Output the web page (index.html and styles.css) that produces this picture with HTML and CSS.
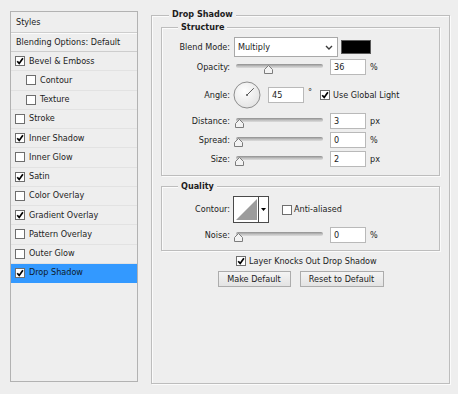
FILE: index.html
```html
<!DOCTYPE html>
<html>
<head>
<meta charset="utf-8">
<title>Layer Style</title>
<link rel="stylesheet" href="styles.css">
</head>
<body>
<div class="dialog">
  <div class="styles-list">
    <div class="list-head">Styles</div>
    <div class="list-blend">Blending Options: Default</div>
    <div class="item"><span class="cb"><svg viewBox="0 0 8 8"><path d="M1.2 4.2 L3.2 6.4 L6.9 1.2"/></svg></span>Bevel &amp; Emboss</div>
    <div class="item sub"><span class="cb"></span>Contour</div>
    <div class="item sub"><span class="cb"></span>Texture</div>
    <div class="item"><span class="cb"></span>Stroke</div>
    <div class="item"><span class="cb"><svg viewBox="0 0 8 8"><path d="M1.2 4.2 L3.2 6.4 L6.9 1.2"/></svg></span>Inner Shadow</div>
    <div class="item"><span class="cb"></span>Inner Glow</div>
    <div class="item"><span class="cb"><svg viewBox="0 0 8 8"><path d="M1.2 4.2 L3.2 6.4 L6.9 1.2"/></svg></span>Satin</div>
    <div class="item"><span class="cb"></span>Color Overlay</div>
    <div class="item"><span class="cb"><svg viewBox="0 0 8 8"><path d="M1.2 4.2 L3.2 6.4 L6.9 1.2"/></svg></span>Gradient Overlay</div>
    <div class="item"><span class="cb"></span>Pattern Overlay</div>
    <div class="item"><span class="cb"></span>Outer Glow</div>
    <div class="item selected"><span class="cb"><svg viewBox="0 0 8 8"><path d="M1.2 4.2 L3.2 6.4 L6.9 1.2"/></svg></span>Drop Shadow</div>
  </div>

  <div class="main">
    <div class="group outer">
      <div class="group-title outer-title">Drop Shadow</div>

      <div class="group structure">
        <div class="group-title">Structure</div>

        <div class="row row-blend">
          <div class="label">Blend Mode:</div>
          <div class="select"><span>Multiply</span><svg class="chev" viewBox="0 0 8 5"><polyline points="1,1 4,4 7,1"/></svg></div>
          <div class="swatch"></div>
        </div>

        <div class="row row-std gap2">
          <div class="label">Opacity:</div>
          <div class="slider"><div class="track"></div><svg class="thumb" style="left:28px" viewBox="0 0 9 9"><path d="M0.5 8.5 V4.5 L4.5 0.5 L8.5 4.5 V8.5 Z"/></svg></div>
          <div class="num">36</div>
          <div class="unit">%</div>
        </div>

        <div class="row row-angle">
          <div class="label">Angle:</div>
          <svg class="dial" viewBox="0 0 28 28">
            <defs><radialGradient id="dg" cx="0.4" cy="0.35" r="0.7"><stop offset="0" stop-color="#ffffff"/><stop offset="1" stop-color="#e2e2e2"/></radialGradient></defs>
            <circle cx="14" cy="14" r="13" fill="url(#dg)" stroke="#8e8e8e" stroke-width="1"/>
            <line x1="14" y1="14" x2="20.8" y2="7.2" stroke="#5a5a5a" stroke-width="1"/>
            <circle cx="14" cy="14" r="1" fill="#555"/>
          </svg>
          <div class="num angle-num">45</div>
          <div class="deg">°</div>
          <span class="cb gl"><svg viewBox="0 0 8 8"><path d="M1.2 4.2 L3.2 6.4 L6.9 1.2"/></svg></span>
          <div class="cb-text">Use Global Light</div>
        </div>

        <div class="row row-std gap4">
          <div class="label">Distance:</div>
          <div class="slider"><div class="track"></div><svg class="thumb" style="left:-1px" viewBox="0 0 9 9"><path d="M0.5 8.5 V4.5 L4.5 0.5 L8.5 4.5 V8.5 Z"/></svg></div>
          <div class="num">3</div>
          <div class="unit">px</div>
        </div>

        <div class="row row-std gap3">
          <div class="label">Spread:</div>
          <div class="slider"><div class="track"></div><svg class="thumb" style="left:-2px" viewBox="0 0 9 9"><path d="M0.5 8.5 V4.5 L4.5 0.5 L8.5 4.5 V8.5 Z"/></svg></div>
          <div class="num">0</div>
          <div class="unit">%</div>
        </div>

        <div class="row row-std gap3">
          <div class="label">Size:</div>
          <div class="slider"><div class="track"></div><svg class="thumb" style="left:-1px" viewBox="0 0 9 9"><path d="M0.5 8.5 V4.5 L4.5 0.5 L8.5 4.5 V8.5 Z"/></svg></div>
          <div class="num">2</div>
          <div class="unit">px</div>
        </div>
      </div>

      <div class="group quality">
        <div class="group-title">Quality</div>

        <div class="row row-contour">
          <div class="label">Contour:</div>
          <svg class="contour" viewBox="0 0 36 27">
            <rect x="0.5" y="0.5" width="35" height="26" fill="#ffffff" stroke="#4a4a4a"/>
            <polygon points="3,24 24,3 24,24" fill="#9c9c9c"/>
            <line x1="25.5" y1="1" x2="25.5" y2="26" stroke="#4a4a4a"/>
            <polygon points="28,12 33,12 30.5,15" fill="#000"/>
          </svg>
          <span class="cb aa"></span>
          <div class="cb-text">Anti-aliased</div>
        </div>

        <div class="row row-std gap4">
          <div class="label">Noise:</div>
          <div class="slider"><div class="track"></div><svg class="thumb" style="left:-2px" viewBox="0 0 9 9"><path d="M0.5 8.5 V4.5 L4.5 0.5 L8.5 4.5 V8.5 Z"/></svg></div>
          <div class="num">0</div>
          <div class="unit">%</div>
        </div>
      </div>

      <div class="knock">
        <span class="cb"><svg viewBox="0 0 8 8"><path d="M1.2 4.2 L3.2 6.4 L6.9 1.2"/></svg></span>
        <div class="cb-text">Layer Knocks Out Drop Shadow</div>
      </div>

      <div class="buttons">
        <div class="btn btn-make">Make Default</div>
        <div class="btn btn-reset">Reset to Default</div>
      </div>
    </div>
  </div>
</div>
</body>
</html>
```
FILE: styles.css
```css
* {
  box-sizing: border-box;
  margin: 0;
  padding: 0;
}

html, body {
  background: #eeeeee;
}

body {
  width: 458px;
  height: 394px;
  overflow: hidden;
  font-family: "DejaVu Sans Condensed", "DejaVu Sans", sans-serif;
  font-stretch: condensed;
  font-size: 9px;
  line-height: 11px;
  color: #1c1c1c;
}

.dialog {
  display: flex;
  align-items: flex-start;
  gap: 13px;
  padding: 11px 0 0 10px;
}

/* ---------- left styles list ---------- */
.styles-list {
  width: 128px;
  height: 371px;
  flex: none;
  border: 1px solid #b2b2b2;
  background: #eeeeee;
  display: flex;
  flex-direction: column;
}

.list-head {
  height: 21px;
  flex: none;
  display: flex;
  align-items: center;
  padding-left: 5px;
  border-bottom: 1px solid #cdcdcd;
}

.list-blend {
  height: 19px;
  flex: none;
  display: flex;
  align-items: center;
  padding-left: 5px;
  border-top: 1px solid #fbfbfb;
  border-bottom: 1px solid #cdcdcd;
}

.item {
  height: 19.25px;
  flex: none;
  display: flex;
  align-items: center;
  gap: 4px;
  padding-left: 4px;
  border-bottom: 1px solid #e2e2e2;
}

.item.sub {
  padding-left: 15px;
}

.item.selected {
  background: #3399ff;
  border-bottom-color: #3399ff;
  color: #0d1a2a;
}

/* ---------- checkbox ---------- */
.cb {
  width: 10px;
  height: 10px;
  flex: none;
  display: inline-flex;
  align-items: center;
  justify-content: center;
  background: #ffffff;
  border: 1px solid #6e6e6e;
}

.cb svg {
  width: 8px;
  height: 8px;
}

.cb svg path {
  fill: none;
  stroke: #000000;
  stroke-width: 1.7;
}

.cb-text {
  white-space: nowrap;
}

/* ---------- group boxes ---------- */
.main {
  margin-top: 4px;
}

.group {
  position: relative;
  border: 1px solid #bdbdbd;
  box-shadow: inset 1px 1px 0 #fbfbfb, 1px 1px 0 #fbfbfb;
}

.group-title {
  position: absolute;
  top: -7px;
  left: 16px;
  padding: 0 3px;
  background: #eeeeee;
  font-weight: bold;
  line-height: 12px;
}

.outer-title {
  top: -8px;
  left: 17px;
}

.outer {
  width: 299px;
  height: 369px;
  padding: 11px 9px 0 9px;
}

.structure {
  width: 279px;
  height: 149px;
  padding-top: 9px;
}

.quality {
  width: 279px;
  height: 65px;
  margin-top: 10px;
  padding-top: 9px;
}

/* ---------- rows ---------- */
.row {
  display: flex;
  align-items: center;
}

.label {
  width: 68px;
  flex: none;
  text-align: right;
  margin-right: 3px;
  white-space: nowrap;
}

.row-blend {
  height: 20px;
}

.row-std {
  height: 16px;
}

.gap2 { margin-top: 2px; }
.gap3 { margin-top: 3px; }
.gap4 { margin-top: 4px; }

.row-angle {
  height: 28px;
  margin-top: 6px;
}

.row-contour {
  height: 27px;
}

/* select + swatch */
.select {
  width: 104px;
  height: 20px;
  margin-left: 1px;
  flex: none;
  display: flex;
  align-items: center;
  justify-content: space-between;
  padding: 0 4px 0 3px;
  background: #ffffff;
  border: 1px solid #a8a8a8;
}

.chev {
  width: 8px;
  height: 5px;
}

.chev polyline {
  fill: none;
  stroke: #3a3a3a;
  stroke-width: 1.4;
}

.swatch {
  width: 30px;
  height: 14px;
  margin-left: 3px;
  flex: none;
  background: #000000;
  border: 1px solid #5a5a5a;
}

/* slider */
.slider {
  position: relative;
  width: 87px;
  height: 11px;
  margin-left: 3px;
  flex: none;
}

.track {
  position: absolute;
  left: 0;
  right: 0;
  top: 2px;
  height: 4px;
  border-radius: 2px;
  background: linear-gradient(#8f8f8f, #c4c4c4 60%, #dcdcdc);
}

.thumb {
  position: absolute;
  top: 3px;
  width: 9px;
  height: 9px;
}

.thumb path {
  fill: #f3f3f3;
  stroke: #7c7c7c;
  stroke-width: 1;
}

/* numeric input */
.num {
  width: 36px;
  height: 16px;
  margin-left: 7px;
  flex: none;
  display: flex;
  align-items: center;
  padding-left: 3px;
  background: #ffffff;
  border: 1px solid #b9b9b9;
}

.unit {
  margin-left: 4px;
}

/* angle */
.dial {
  width: 28px;
  height: 28px;
  flex: none;
}

.angle-num {
  margin-left: 7px;
}

.deg {
  margin-left: 4px;
  align-self: flex-start;
  margin-top: 6px;
}

.gl {
  margin-left: 8px;
  margin-right: 3px;
}

/* contour */
.contour {
  width: 36px;
  height: 27px;
  flex: none;
}

.aa {
  margin-left: 13px;
  margin-right: 2px;
}

/* bottom */
.knock {
  display: flex;
  align-items: center;
  gap: 3px;
  height: 14px;
  margin-top: 3px;
  padding-left: 75px;
}

.buttons {
  display: flex;
  justify-content: center;
  gap: 9px;
  margin-top: 3px;
}

.btn {
  height: 16px;
  display: flex;
  align-items: center;
  justify-content: center;
  background: linear-gradient(#f4f4f4, #e3e3e3);
  border: 1px solid #acacac;
  white-space: nowrap;
}

.btn-make {
  width: 73px;
}

.btn-reset {
  width: 84px;
}
```
